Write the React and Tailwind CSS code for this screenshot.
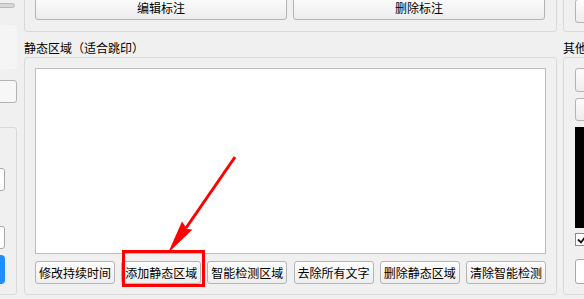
import React from 'react';

// Static-region panel of the marking tool, with the red annotation arrow
// pointing at the "添加静态区域" button.
const btn =
  'flex items-center justify-center rounded-[3px] border border-[#b4b4b4] bg-linear-to-b from-[#fdfdfd] to-[#ececec] text-[12px] leading-none whitespace-nowrap';

const frame = 'rounded-[3px] border border-[#d9d9d9]';

function Button({ label, className = '' }) {
  return <div className={`${btn} ${className}`}>{label}</div>;
}

const actions = ['修改持续时间', '添加静态区域', '智能检测区域', '去除所有文字', '删除静态区域', '清除智能检测'];

export default function App() {
  return (
    <div className="relative h-[299px] w-[584px] overflow-hidden bg-[#f0f0f0] font-['Noto_Sans_CJK_SC','Noto_Sans',sans-serif] text-[12px] text-black">
      <div className="flex">
        {/* left column, mostly cut off */}
        <div className="ml-[-100px] flex w-[117px] shrink-0 flex-col">
          <div className="mt-[3px] h-[5px] w-[115px] rounded-full border border-[#b9b9b9] bg-[#d8d8d8]" />
          <div className="mt-[17px] h-[44px] rounded-[4px] bg-[#f5f5f5]" />
          <div className="mt-[11px] h-[23px] rounded-[3px] border border-[#b4b4b4] bg-[#f7f7f7]" />
          <div className={`${frame} mt-[24px] flex h-[168px] flex-col pt-[40px]`}>
            <div className="h-[23px] w-[104px] rounded-[3px] border border-[#a8a8a8] bg-white" />
            <div className="mt-[35px] h-[23px] w-[104px] rounded-[3px] border border-[#a8a8a8] bg-white" />
            <div className="mt-[6px] h-[29px] w-[104px] rounded-[4px] bg-[#1e8fff]" />
          </div>
        </div>

        {/* middle column */}
        <div className="ml-[7px] flex w-[533px] shrink-0 flex-col">
          <div className={`${frame} mt-[-12px] flex h-[44px] items-end gap-[6px] pb-[11px] pl-[10px] pr-[11px]`}>
            <Button label="编辑标注" className="h-[24px] flex-1" />
            <Button label="删除标注" className="h-[24px] flex-1" />
          </div>
          <div className="h-[25px] pt-[8px] leading-[16px]">静态区域（适合跳印）</div>
          <div className={`${frame} flex h-[238px] flex-col p-[10px]`}>
            <div className="h-[186px] border border-[#bdbdbd] bg-white" />
            <div className="mt-[7px] flex h-[23px] justify-between">
              {actions.map((label) => (
                <Button key={label} label={label} className="h-[23px] w-[80px] from-[#f6f6f6] to-[#eeeeee]" />
              ))}
            </div>
          </div>
        </div>

        {/* right column, cut off at the window edge */}
        <div className="ml-[6px] flex w-[150px] shrink-0 flex-col">
          <div className={`${frame} mt-[-12px] flex h-[44px] items-end pb-[8px] pl-[11px]`}>
            <Button label="" className="h-[24px] w-[120px]" />
          </div>
          <div className="h-[25px] pt-[8px] leading-[16px]">其他</div>
          <div className={`${frame} flex h-[238px] flex-col pl-[11px] pt-[10px]`}>
            <Button label="" className="h-[24px] w-[120px]" />
            <Button label="" className="mt-[6px] h-[23px] w-[120px]" />
            <div className="mt-[6px] h-[101px] bg-black" />
            <div className="mt-[5px] flex h-[13px] w-[13px] items-center justify-center border border-[#8a8a8a] bg-white">
              <svg width="10" height="9" viewBox="0 0 10 9">
                <path d="M1 4.5 L4 7.5 L9 1" fill="none" stroke="#111" strokeWidth="1.8" />
              </svg>
            </div>
            <div className="mt-[13px] h-[25px] w-[120px] rounded-[3px] border border-[#a8a8a8] bg-white" />
          </div>
        </div>
      </div>

      {/* annotation overlay */}
      <div className="absolute left-[122px] top-[250px] h-[37px] w-[83px] border-[3px] border-[#ff0000]" />
      <svg className="absolute left-0 top-0" width="584" height="299" viewBox="0 0 584 299">
        <line x1="235" y1="157" x2="186" y2="228" stroke="#ff0000" strokeWidth="3" />
        <polygon points="168,253 182,221.5 187,229 192.5,229.5" fill="#ff0000" />
      </svg>
    </div>
  );
}
